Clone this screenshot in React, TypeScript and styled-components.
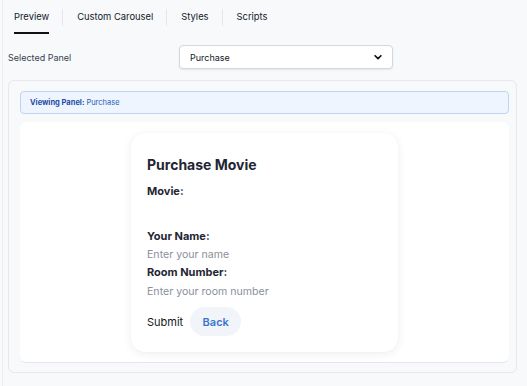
import React, { useState } from 'react';
import styled, { createGlobalStyle } from 'styled-components';

const GlobalStyle = createGlobalStyle`
    html, body {
        margin: 0;
        padding: 0;
        background: #f8f9fb;
        font-family: Inter, "Noto Sans", "Liberation Sans", sans-serif;
        color: #1f2937;
    }
    * { box-sizing: border-box; }
`;

const Page = styled.div`
    width: 527px;
    height: 386px;
    margin-left: 2px;
    border-left: 1px solid #eceef2;
    overflow: hidden;
`;

const TabBar = styled.div`
    display: flex;
    align-items: center;
    height: 35px;
    padding-left: 11px;
`;

const Tab = styled.div<{ $active?: boolean }>`
    position: relative;
    display: flex;
    align-items: center;
    height: 17px;
    padding: 0 13px 2px 0;
    margin-right: 14px;
    font-size: 9.4px;
    color: #111827;
    border-right: 1px solid #e5e7eb;

    &:last-child {
        border-right: none;
    }

    &::after {
        content: '';
        display: ${p => (p.$active ? 'block' : 'none')};
        position: absolute;
        left: 0;
        right: 13px;
        bottom: -8px;
        height: 2px;
        background: #111;
    }
`;

const SelectRow = styled.div`
    display: flex;
    align-items: center;
    height: 24px;
    margin-top: 10px;
    padding-left: 5px;
`;

const Label = styled.label`
    width: 171px;
    font-size: 9px;
    color: #374151;
`;

const SelectBox = styled.div`
    width: 214px;
    height: 24px;
    background: #fff;
    border: 1px solid #d4d7dd;
    border-radius: 4px;
    box-shadow: 0 1px 2px rgba(0, 0, 0, 0.08);
    display: flex;
    align-items: center;
    justify-content: space-between;
    padding: 0 9px 0 10px;
    font-size: 9px;
    color: #111827;
`;

const Panel = styled.div`
    margin: 11px 12px 0 5px;
    height: 293px;
    border: 1px solid #e6e8ec;
    border-radius: 6px;
    padding: 10px 7px 0 11px;
    display: flex;
    flex-direction: column;
    gap: 8px;
`;

const Banner = styled.div`
    height: 23px;
    background: #eef5ff;
    border: 1px solid #bfd4f2;
    border-radius: 4px;
    display: flex;
    align-items: center;
    padding: 0 9px;
    font-size: 7.5px;
    color: #2b5db8;

    strong {
        font-weight: 700;
        color: #1d4da8;
        margin-right: 2px;
    }
`;

const Stage = styled.div`
    height: 241px;
    background: #fff;
    border-radius: 6px;
    border-bottom: 1px solid #e4e6ea;
    display: flex;
    justify-content: center;
    padding-top: 11px;
`;

const Card = styled.div`
    width: 267px;
    height: 219px;
    background: #fff;
    border-radius: 14px;
    box-shadow: 0 2px 10px rgba(0, 0, 0, 0.07), 0 0 1px rgba(0, 0, 0, 0.05);
    padding: 23px 16px 0 16px;
    display: flex;
    flex-direction: column;
`;

const Title = styled.h2`
    margin: 0 0 11px 0;
    font-size: 14px;
    font-weight: 700;
    color: #1f2533;
    line-height: 17px;
`;

const FieldLabel = styled.div<{ $gap?: number; $top?: number }>`
    font-size: 11px;
    font-weight: 700;
    color: #1f2533;
    line-height: 14px;
    margin-top: ${p => p.$top ?? 0}px;
    margin-bottom: ${p => p.$gap ?? 0}px;
`;

const TextInput = styled.input`
    border: none;
    outline: none;
    padding: 0;
    background: transparent;
    font-family: inherit;
    font-size: 10.6px;
    line-height: 14px;
    height: 14px;
    color: #1f2533;

    &::placeholder {
        color: #8b9099;
    }
`;

const Actions = styled.div`
    display: flex;
    align-items: center;
    gap: 7px;
    margin-top: 8px;
`;

const SubmitButton = styled.button`
    border: none;
    background: none;
    padding: 0;
    font-family: inherit;
    font-size: 11px;
    color: #111827;
    cursor: pointer;
`;

const BackButton = styled.button`
    border: none;
    background: #f1f4f8;
    width: 51px;
    height: 29px;
    border-radius: 15px;
    font-family: inherit;
    font-size: 11px;
    font-weight: 600;
    color: #3b77cf;
    cursor: pointer;
`;

const Chevron = () => (
    <svg width="10" height="10" viewBox="0 0 24 24" fill="none" stroke="#111" strokeWidth="4" strokeLinecap="round" strokeLinejoin="round">
        <path d="M5 9l7 7 7-7" />
    </svg>
);

const App: React.FC = () => {
    const [name, setName] = useState('');
    const [room, setRoom] = useState('');
    const tabs = ['Preview', 'Custom Carousel', 'Styles', 'Scripts'];

    return (
        <Page>
            <GlobalStyle />
            <TabBar>
                {tabs.map((t, i) => (
                    <Tab key={t} $active={i === 0}>{t}</Tab>
                ))}
            </TabBar>
            <SelectRow>
                <Label>Selected Panel</Label>
                <SelectBox>
                    <span>Purchase</span>
                    <Chevron />
                </SelectBox>
            </SelectRow>
            <Panel>
                <Banner>
                    <strong>Viewing Panel:</strong> Purchase
                </Banner>
                <Stage>
                    <Card>
                        <Title>Purchase Movie</Title>
                        <FieldLabel $gap={31}>Movie:</FieldLabel>
                        <FieldLabel $gap={5}>Your Name:</FieldLabel>
                        <TextInput placeholder="Enter your name" value={name} onChange={e => setName(e.target.value)} />
                        <FieldLabel $top={3} $gap={6}>Room Number:</FieldLabel>
                        <TextInput placeholder="Enter your room number" value={room} onChange={e => setRoom(e.target.value)} />
                        <Actions>
                            <SubmitButton>Submit</SubmitButton>
                            <BackButton>Back</BackButton>
                        </Actions>
                    </Card>
                </Stage>
            </Panel>
        </Page>
    );
};

export default App;
